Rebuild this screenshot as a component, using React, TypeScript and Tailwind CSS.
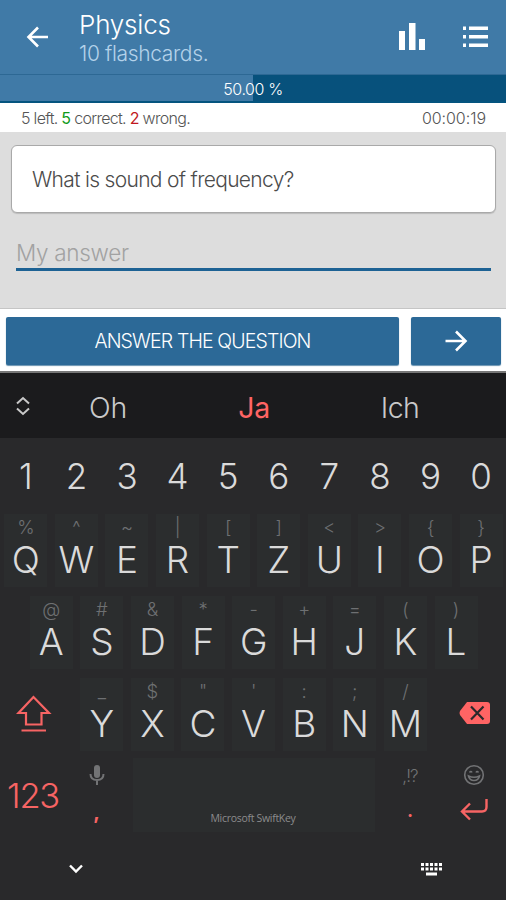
import React from "react";

type KeyDef = [label: string, alt: string];

const rowOne: KeyDef[] = [["Q", "%"], ["W", "^"], ["E", "~"], ["R", "|"], ["T", "["], ["Z", "]"], ["U", "<"], ["I", ">"], ["O", "{"], ["P", "}"]];
const rowTwo: KeyDef[] = [["A", "@"], ["S", "#"], ["D", "&"], ["F", "*"], ["G", "-"], ["H", "+"], ["J", "="], ["K", "("], ["L", ")"]];
const rowThree: KeyDef[] = [["Y", "_"], ["X", "$"], ["C", '"'], ["V", "'"], ["B", ":"], ["N", ";"], ["M", "/"]];

function Key({ def }: { def: KeyDef }) {
  return (
    <div className="flex w-[50.6px] shrink-0 justify-center">
      <div className="flex h-[73px] w-[43px] flex-col items-center bg-[#2b2d2e]">
        <span className="mt-[2px] h-[22px] text-[18.5px] leading-[22px] text-[#6e7072]">{def[1]}</span>
        <span className="mt-[4px] h-[36px] text-[37px] leading-[36px] text-[#dadada]">{def[0]}</span>
      </div>
    </div>
  );
}

function Header() {
  return (
    <header className="flex h-[74px] items-center bg-[#407aa7] text-white">
      <svg className="ml-[26px] h-6 w-6" viewBox="0 0 24 24" fill="none" stroke="currentColor" strokeWidth="2.6">
        <path d="M22 12H3M12 2.500L2.500 12L12 21.500" />
      </svg>
      <div className="ml-[29px] flex h-full flex-1 flex-col">
        <h1 className="mt-[10px] text-[26px] font-light leading-[30px] tracking-[-0.2px]">Physics</h1>
        <p className="text-[21px] leading-[28px] tracking-[-0.35px] text-[#b4d2ea]">10 flashcards.</p>
      </div>
      <svg className="-mt-[2px] h-7 w-[26px]" viewBox="0 0 26 28" fill="currentColor">
        <path d="M0 9h6v19H0zM10 1h6.500v27H10zM20 17h6v11H20z" />
      </svg>
      <svg className="mr-[18px] ml-[38px] h-[22px] w-[25px]" viewBox="0 0 25 22" fill="currentColor">
        <path d="M0 .5h3v3.500H0zM6 .5h19v3.500H6zM0 9h3v3.500H0zM6 9h19v3.500H6zM0 17.500h3V21H0zM6 17.500h19V21H6z" />
      </svg>
    </header>
  );
}

function Quiz() {
  return (
    <>
      <div className="flex h-[29px] items-center justify-center border-t border-b-2 border-t-[#2d6894] border-b-[#04547f] bg-linear-to-r from-[#407aa7] from-50% to-[#07517c] to-50% pt-[2px] text-[16px] leading-none tracking-[-0.4px] text-white">
        50.00 %
      </div>
      <div className="flex h-[29px] items-center justify-between bg-white pr-[20px] pl-[21px] text-[16px] tracking-[-0.7px] text-[#555]">
        <span>
          5 left. <span className="font-normal text-[#109a19]">5</span> correct. <span className="font-normal text-[#c01820]">2</span> wrong.
        </span>
        <span className="tracking-[-0.05px]">00:00:19</span>
      </div>
      <main className="flex h-[177px] flex-col border-b border-[#c5c5c5] bg-[#dddddd] pt-[13px] pr-[10px] pl-[11px]">
        <div className="flex h-[68px] items-center rounded-[6px] border border-[#a9a9a9] bg-white pt-[2px] pl-5 text-[21px] tracking-[-0.68px] text-[#4b4b4b] shadow-[0_1px_1px_#bbb]">
          What is sound of frequency?
        </div>
        <div className="mx-[5px] mt-[25px] flex h-[33px] items-center border-b-[3px] border-[#1d6294] text-[22.5px] tracking-[-0.3px] text-[#a2a2a2]">
          My answer
        </div>
      </main>
      <div className="flex h-[64px] gap-3 border-b-2 border-[#777] bg-white pt-[8px] pr-[5px] pb-[6px] pl-[6px] text-white">
        <button className="flex w-[393px] items-center justify-center rounded-[2px] bg-[#2c6997] pt-[2px] text-[19.500px] tracking-[-0.87px] shadow-[0_1px_1px_#6591b0]">
          ANSWER THE QUESTION
        </button>
        <button className="flex w-[90px] items-center justify-center rounded-[2px] bg-[#2c6997] shadow-[0_1px_1px_#6591b0]">
          <svg className="h-6 w-6" viewBox="0 0 24 24" fill="none" stroke="currentColor" strokeWidth="2.6">
            <path d="M1.500 12H21M12 2.500L21.500 12L12 21.500" />
          </svg>
        </button>
      </div>
    </>
  );
}

function Suggestions() {
  return (
    <div className="flex h-[65px] items-center bg-[#1b1b1d] text-[28.5px] leading-[32px] text-[#c9c9c9]">
      <svg className="ml-[15px] h-5 w-4" viewBox="0 0 16 20" fill="none" stroke="currentColor" strokeWidth="2">
        <path d="M2 7.500L8 2L14 7.500M2 12.500L8 18L14 12.500" />
      </svg>
      <span className="ml-[4px] w-[146px] pt-[4px] text-center tracking-[-0.2px]">Oh</span>
      <span className="w-[146px] pt-[4px] text-center font-normal tracking-[-0.5px] text-[#ff6464]">Ja</span>
      <span className="w-[146px] pt-[4px] text-center tracking-[-0.6px]">Ich</span>
    </div>
  );
}

function Keyboard() {
  return (
    <section className="h-[462px] bg-[#29292b]">
      <div className="flex h-[76px] items-center pl-[0.5px] text-[35px] text-[#dadada]">
        {"1234567890".split("").map((n) => (
          <span key={n} className="w-[50.6px] shrink-0 text-center">{n}</span>
        ))}
      </div>
      <div className="flex h-[82px] pl-[0.5px]">{rowOne.map((k) => <Key key={k[0]} def={k} />)}</div>
      <div className="flex h-[82px] pl-[26px]">{rowTwo.map((k) => <Key key={k[0]} def={k} />)}</div>
      <div className="flex h-[80px]">
        <div className="w-[76.500px]">
          <svg className="mt-[16px] ml-[16px] h-[40px] w-[36px]" viewBox="0 0 36 40" fill="none" stroke="#f76464" strokeWidth="2.200">
            <path d="M17.500 3L2.500 19H10V30.500H25.500V19H33ZM5.500 36.500H30" />
          </svg>
        </div>
        {rowThree.map((k) => <Key key={k[0]} def={k} />)}
        <svg className="mt-[23px] ml-[28px] h-6 w-8" viewBox="0 0 32 24">
          <path d="M8 1H28Q31 1 31 4V20Q31 23 28 23H8L1 14Q0 12 1 10Z" fill="#ff6464" />
          <path d="M12 5.500L24.500 18.500M24.500 5.500L12 18.500" stroke="#29292b" strokeWidth="2.200" />
        </svg>
      </div>
      <div className="flex h-[74px] text-[#727375]">
        <span className="w-[66px] pt-[18px] text-center text-[34.5px] leading-[40px] tracking-[-1.3px] text-[#f76464]">123</span>
        <div className="flex w-[67px] flex-col items-center pr-[6px]">
          <svg className="mt-[6px] h-[22px] w-4" viewBox="0 0 16 22">
            <rect x="5" y="1" width="6" height="13" rx="3" fill="currentColor" />
            <path d="M1.500 10Q1.500 16 8 16Q14.500 16 14.500 10M8 16V21" fill="none" stroke="currentColor" strokeWidth="2" />
          </svg>
          <span className="mt-[11px] text-[20px] leading-[30px] font-bold text-[#f76464]">,</span>
        </div>
        <div className="flex w-[242px] items-end justify-center bg-[#2b2d2e] pr-[2px] pb-[6px] font-['Open_Sans'] text-[10.5px] leading-4 font-normal tracking-[-0.3px] text-[#8b8c8d]">
          Microsoft SwiftKey
        </div>
        <div className="flex w-[70px] flex-col items-center">
          <span className="mt-[6px] text-[17px] leading-[24px] tracking-[-0.9px]">,!?</span>
          <span className="mt-[6px] text-[23px] leading-[30px] font-normal text-[#f76464]">.</span>
        </div>
        <div className="flex w-[57px] flex-col items-center">
          <svg className="mt-[6px] h-[22px] w-[22px]" viewBox="0 0 22 22" fill="none" stroke="currentColor" strokeWidth="1.600">
            <circle cx="11" cy="11" r="9.300" />
            <path d="M5.500 12Q6.500 16.500 11 16.500Q15.500 16.500 16.500 12Q11 14.500 5.500 12Z" />
            <path d="M6.500 8.500Q8 6.500 9 8.500M13 8.500Q14 6.500 15.500 8.500" />
          </svg>
          <svg className="mt-[12px] h-6 w-7" viewBox="0 0 28 24" fill="none" stroke="#f76464" strokeWidth="2.400">
            <path d="M26.500 1V9Q26.500 13.500 22 13.500H2M10 5.500L2 13.500L10 21.500" />
          </svg>
        </div>
      </div>
      <nav className="flex h-[68px] items-center pt-[6px] text-white">
        <svg className="ml-[69px] h-[10px] w-[14px]" viewBox="0 0 14 10" fill="none" stroke="currentColor" strokeWidth="2.400">
          <path d="M1 1.500L7 7.500L13 1.500" />
        </svg>
        <svg className="ml-[338px] h-[13px] w-[21px]" viewBox="0 0 21 13" fill="currentColor">
          <path d="M0 0h3v3H0zM4.500 0h3v3h-3zM9 0h3v3H9zM13.500 0h3v3h-3zM18 0h3v3h-3zM0 4.500h3v3H0zM4.500 4.500h3v3h-3zM9 4.500h3v3H9zM13.500 4.500h3v3h-3zM18 4.500h3v3h-3zM5 9.500h11v3H5z" />
        </svg>
      </nav>
    </section>
  );
}

export default function App() {
  return (
    <div className="h-[900px] w-[506px] overflow-hidden font-['Inter','Liberation_Sans',sans-serif] font-light">
      <Header />
      <Quiz />
      <Suggestions />
      <Keyboard />
    </div>
  );
}
